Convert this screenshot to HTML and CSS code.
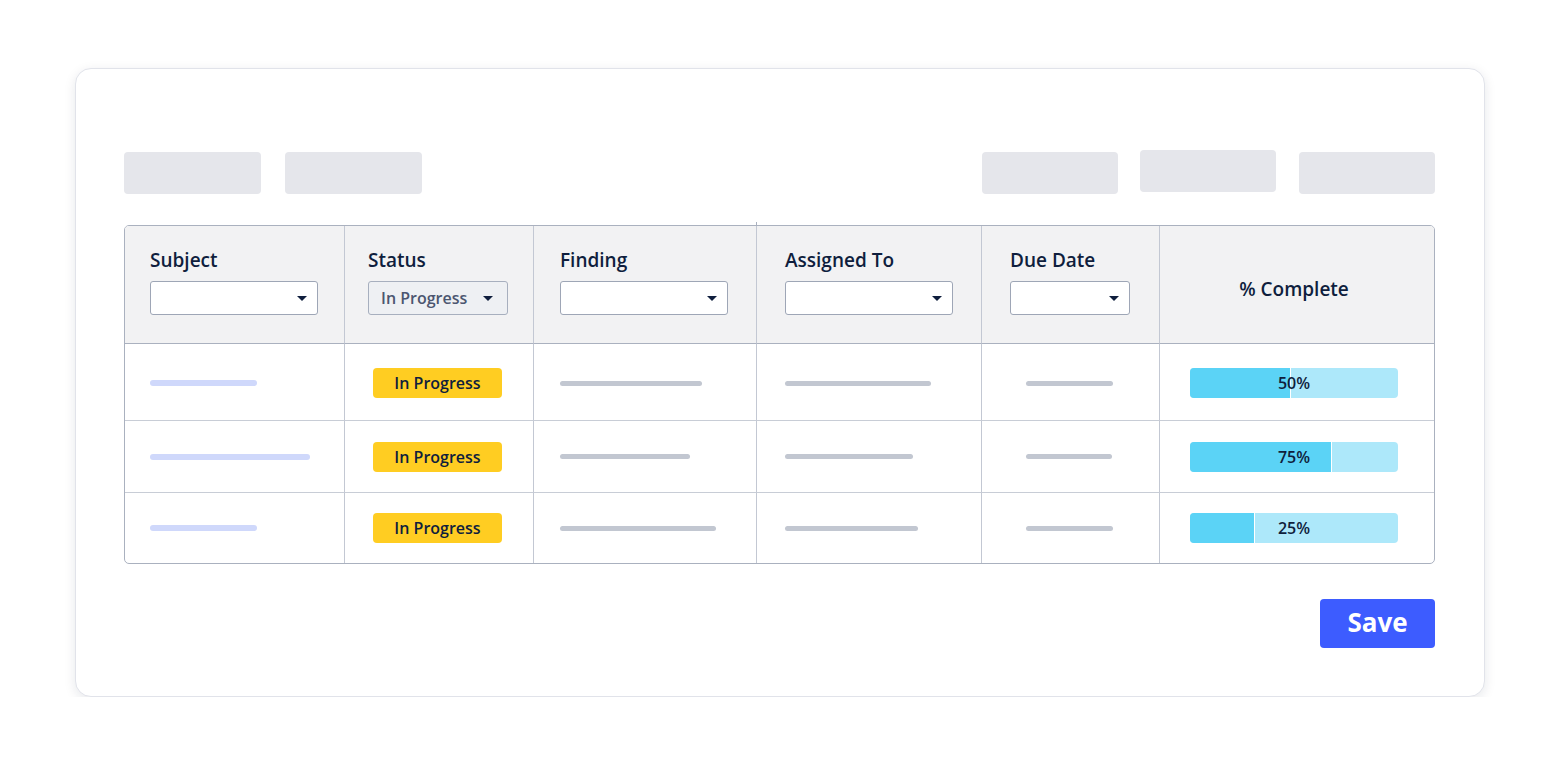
FILE: index.html
```html
<!DOCTYPE html>
<html lang="en">
<head>
<meta charset="utf-8">
<title>Findings</title>
<link rel="stylesheet" href="styles.css">
</head>
<body>
<div class="card">
  <div class="toolbar">
    <div class="group">
      <div class="ph"></div>
      <div class="ph"></div>
    </div>
    <div class="group right">
      <div class="ph"></div>
      <div class="ph raised"></div>
      <div class="ph"></div>
    </div>
  </div>

  <div class="table">
    <div class="th c1"><div class="label">Subject</div><div class="select"><span></span><i class="caret"></i></div></div>
    <div class="th c2"><div class="label">Status</div><div class="select filled"><span>In Progress</span><i class="caret"></i></div></div>
    <div class="th c3"><div class="label">Finding</div><div class="select"><span></span><i class="caret"></i></div></div>
    <div class="th c4 tick"><div class="label">Assigned To</div><div class="select"><span></span><i class="caret"></i></div></div>
    <div class="th c5"><div class="label">Due Date</div><div class="select short"><span></span><i class="caret"></i></div></div>
    <div class="th c6 center"><div class="label">% Complete</div></div>

    <div class="td c1 r1"><div class="line blue" style="width:107px"></div></div>
    <div class="td c2 r1 mid"><span class="badge">In Progress</span></div>
    <div class="td c3 r1"><div class="line" style="width:142px"></div></div>
    <div class="td c4 r1"><div class="line" style="width:146px"></div></div>
    <div class="td c5 r1 mid"><div class="line" style="width:87px"></div></div>
    <div class="td c6 r1"><div class="bar"><div class="fill" style="width:101px"></div><span class="pct">50%</span></div></div>

    <div class="td c1 r2"><div class="line blue" style="width:160px"></div></div>
    <div class="td c2 r2 mid"><span class="badge">In Progress</span></div>
    <div class="td c3 r2"><div class="line" style="width:130px"></div></div>
    <div class="td c4 r2"><div class="line" style="width:128px"></div></div>
    <div class="td c5 r2 mid"><div class="line" style="width:86px"></div></div>
    <div class="td c6 r2"><div class="bar"><div class="fill" style="width:142px"></div><span class="pct">75%</span></div></div>

    <div class="td c1 r3"><div class="line blue" style="width:107px"></div></div>
    <div class="td c2 r3 mid"><span class="badge">In Progress</span></div>
    <div class="td c3 r3"><div class="line" style="width:156px"></div></div>
    <div class="td c4 r3"><div class="line" style="width:133px"></div></div>
    <div class="td c5 r3 mid"><div class="line" style="width:87px"></div></div>
    <div class="td c6 r3"><div class="bar"><div class="fill" style="width:65px"></div><span class="pct">25%</span></div></div>
  </div>

  <div class="actions">
    <button class="save">Save</button>
  </div>
</div>
</body>
</html>
```

FILE: styles.css
```css
* { box-sizing: border-box; }

html, body {
  margin: 0;
  padding: 0;
  background: #ffffff;
  font-family: "Open Sans", "Noto Sans", "Liberation Sans", sans-serif;
  color: #0f1e3d;
}

body {
  padding: 68px 0 0 75px;
}

.card {
  width: 1410px;
  height: 629px;
  background: #ffffff;
  border: 1px solid #e1e3ea;
  border-radius: 16px;
  box-shadow: 0 3px 12px rgba(20, 30, 60, 0.10);
  padding: 83px 49px 0 48px;
}

.toolbar {
  display: flex;
  justify-content: space-between;
  height: 42px;
  width: 1311px;
}

.group {
  display: flex;
  gap: 24px;
}

.group.right {
  gap: 22px;
}

.ph {
  width: 137px;
  height: 42px;
  background: #e5e6eb;
  border-radius: 4px;
}

.group.right .ph {
  width: 136px;
}

.group.right .ph:last-child {
  margin-left: 1px;
}

.ph.raised {
  transform: translateY(-2px);
}

.table {
  margin-top: 31px;
  display: grid;
  grid-template-columns: 219px 189px 223px 225px 178px 275px;
  grid-template-rows: 117px 77px 72px 71px;
  border: 1px solid #aab1bf;
  border-radius: 5px;
  background: #ffffff;
  width: 1311px;
}

.th, .td {
  border-left: 1px solid #c3c8d3;
}

.c1 { border-left: none; padding-left: 25px; }
.c2 { padding-left: 23px; }
.c3 { padding-left: 26px; }
.c4 { padding-left: 28px; }
.c5 { padding-left: 28px; }
.c6 { padding-left: 30px; }

.th {
  background: #f2f2f3;
  padding-top: 21px;
  display: flex;
  flex-direction: column;
}

.th.c1 { border-top-left-radius: 4px; }
.th.c6 { border-top-right-radius: 4px; }

.tick {
  position: relative;
}

.tick::before {
  content: "";
  position: absolute;
  left: -1px;
  top: -4px;
  width: 1px;
  height: 4px;
  background: #aab1bf;
}

.label {
  font-size: 19px;
  font-weight: 600;
  line-height: 26px;
  color: #0f1e3d;
  white-space: nowrap;
}

.th.center {
  padding-left: 0;
  padding-right: 6px;
  padding-top: 50px;
  text-align: center;
}

.select {
  margin-top: 8px;
  width: 168px;
  height: 34px;
  background: #ffffff;
  border: 1px solid #9ea6b6;
  border-radius: 3px;
  display: flex;
  align-items: center;
  justify-content: space-between;
  padding: 0 10px 0 12px;
}

.select.short {
  width: 120px;
}

.select.filled {
  width: 140px;
  background: #eef0f3;
  border-color: #a7afbe;
  justify-content: flex-start;
  gap: 16px;
  padding-right: 15px;
}

.select span {
  font-size: 16px;
  font-weight: 600;
  color: #4b5670;
  line-height: 22px;
  white-space: nowrap;
}

.caret {
  display: block;
  width: 0;
  height: 0;
  border-left: 5px solid transparent;
  border-right: 5px solid transparent;
  border-top: 5px solid #0f1e3d;
}

.td {
  border-top: 1px solid #c8cdd6;
  display: flex;
  align-items: center;
}

.td.r1 {
  border-top-color: #aab1bf;
  padding-top: 2px;
}

.td.mid {
  justify-content: center;
  padding-left: 0;
  padding-right: 3px;
}

.line {
  height: 5px;
  border-radius: 3px;
  background: #c2c7d1;
}

.line.blue {
  height: 6px;
  background: #cfd8fb;
}

.badge {
  display: inline-flex;
  align-items: center;
  justify-content: center;
  width: 129px;
  height: 30px;
  background: #ffcd22;
  border-radius: 4px;
  font-size: 16px;
  font-weight: 600;
  color: #0f1e3d;
}

.bar {
  position: relative;
  width: 208px;
  height: 30px;
  background: #ade8fa;
  border-radius: 4px;
  overflow: hidden;
  display: flex;
  align-items: center;
  justify-content: center;
}

.fill {
  position: absolute;
  left: 0;
  top: 0;
  bottom: 0;
  background: #5bd3f6;
  border-right: 1px solid #ffffff;
}

.pct {
  position: relative;
  font-size: 16px;
  font-weight: 600;
  color: #0f1e3d;
}

.actions {
  display: flex;
  justify-content: flex-end;
  margin-top: 35px;
  width: 1311px;
}

.save {
  width: 115px;
  height: 49px;
  background: #3d5cff;
  border: none;
  border-radius: 4px;
  color: #ffffff;
  font-family: "Open Sans", "Noto Sans", "Liberation Sans", sans-serif;
  font-size: 26px;
  font-weight: 700;
  padding: 0 0 3px 0;
  cursor: pointer;
}
```
